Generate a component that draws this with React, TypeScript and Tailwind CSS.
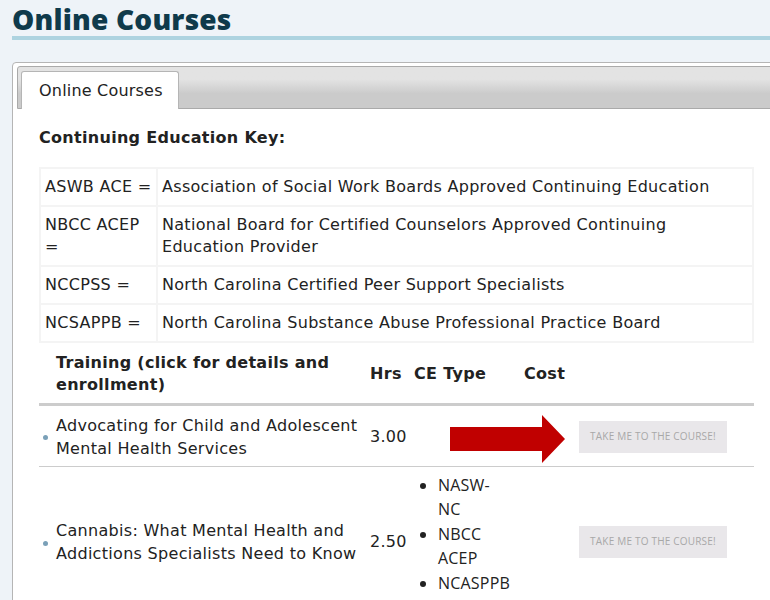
import React from "react";

const body = { fontFamily: '"DejaVu Sans", Verdana, sans-serif' };
const mont = { fontFamily: '"Open Sans", "DejaVu Sans", sans-serif' };

function Arrow() {
  return (
    <svg
      className="absolute left-[411px] top-[9px]"
      width="115"
      height="48"
      viewBox="0 0 115 48"
    >
      <polygon points="0,12 92,12 92,0 115,24 92,48 92,36 0,36" fill="#c00000" />
    </svg>
  );
}

function CourseButton() {
  return (
    <div
      className="w-[148px] h-[32px] bg-[#e9e7ea] flex items-center justify-center text-[10px] tracking-[0.2px] uppercase text-[#a8a8a8]"
      style={mont}
    >
      Take me to the course!
    </div>
  );
}

export default function App() {
  const keyRows: [string, string][] = [
    ["ASWB ACE =", "Association of Social Work Boards Approved Continuing Education"],
    ["NBCC ACEP =", "National Board for Certified Counselors Approved Continuing Education Provider"],
    ["NCCPSS =", "North Carolina Certified Peer Support Specialists"],
    ["NCSAPPB =", "North Carolina Substance Abuse Professional Practice Board"],
  ];

  return (
    <div className="w-[770px] h-[600px] overflow-hidden bg-[#eef3f8] text-[#222]" style={body}>
      <div className="pl-3">
        <h1
          className="text-[28px] font-extrabold leading-[34px] pt-[2px] tracking-[0.2px] text-[#0f3a4b]"
          style={mont}
        >
          Online Courses
        </h1>
        <div className="h-[4px] bg-[#add3e0]" />
      </div>

      <div className="ml-3 mt-[22px] w-[800px] border border-[#b5b5b5] rounded-tl-[4px] bg-white pl-[4px] pt-[3px] min-h-[600px] tracking-[0.3px]">
        <div className="h-[43px] border border-[#aaaaaa] rounded-tl-[3px] bg-gradient-to-b from-[#e3e3e3] from-[30%] to-[#cbcbcb] to-[65%] flex items-end pl-[3px]">
          <div className="w-[158px] h-[38px] -mb-px bg-white border border-b-0 border-[#b5b5b5] rounded-t-[3px] flex items-center pl-[17px] text-[16px] tracking-[0.2px] text-[#222]">
            Online Courses
          </div>
        </div>

        <div className="pl-[22px] w-[737px]">
          <div className="pt-[18px] text-[16px] font-bold leading-[22px]">Continuing Education Key:</div>

          <table className="mt-[18px] w-[715px] border-collapse text-[16px] leading-[22px]">
            <tbody>
              {keyRows.map(([k, v]) => (
                <tr key={k}>
                  <td className="w-[117px] border-2 border-[#f4f4f4] px-[4px] py-[7px] align-top">{k}</td>
                  <td className="border-2 border-[#f4f4f4] px-[4px] py-[7px] align-top">{v}</td>
                </tr>
              ))}
            </tbody>
          </table>

          <div className="w-[715px] mt-[9px]">
            <div className="grid grid-cols-[17px_309px_45px_110px_55px_1fr] items-center border-b-[3px] border-[#cccccc] pb-[7px] text-[16px] font-bold leading-[22px]">
              <div />
              <div>Training (click for details and enrollment)</div>
              <div className="pl-[5px]">Hrs</div>
              <div className="pl-[4px]">CE Type</div>
              <div className="pl-[4px]">Cost</div>
              <div />
            </div>

            <div className="relative grid grid-cols-[17px_309px_45px_110px_55px_1fr] items-center h-[61px] border-b border-[#cccccc] text-[16px] leading-[23px]">
              <div className="flex justify-center pl-[3px]">
                <span className="w-[5px] h-[5px] rounded-full bg-[#7aa0b8] mt-[3px] mr-[8px]" />
              </div>
              <div className="pt-[1px]">Advocating for Child and Adolescent Mental Health Services</div>
              <div className="pl-[5px] pt-[1px]">3.00</div>
              <div />
              <div />
              <div className="pl-[4px] pt-[1px]">
                <CourseButton />
              </div>
              <Arrow />
            </div>

            <div className="grid grid-cols-[17px_309px_45px_110px_55px_1fr] items-center text-[16px] leading-[23px] pt-[7px]">
              <div className="flex justify-center pl-[3px]">
                <span className="w-[5px] h-[5px] rounded-full bg-[#7aa0b8] mt-[3px] mr-[8px]" />
              </div>
              <div>Cannabis: What Mental Health and Addictions Specialists Need to Know</div>
              <div className="pl-[5px]">2.50</div>
              <ul className="list-disc pl-[28px] pb-[14px] text-[16px] leading-[23.5px] tracking-[0.2px] text-[#222]" style={mont}>
                <li className="mb-[2px]">NASW-<br />NC</li>
                <li className="mb-[2px]">NBCC<br />ACEP</li>
                <li>NCASPPB</li>
              </ul>
              <div />
              <div className="pl-[4px]">
                <CourseButton />
              </div>
            </div>
          </div>
        </div>
      </div>
    </div>
  );
}
